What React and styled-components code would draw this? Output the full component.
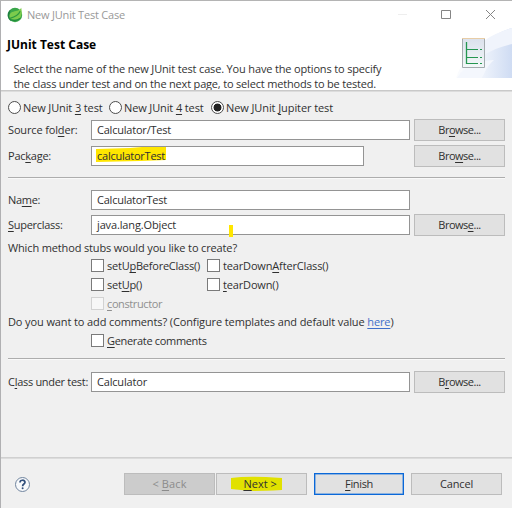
import React from 'react';
import styled, { createGlobalStyle } from 'styled-components';

const Global = createGlobalStyle`
  * { box-sizing: border-box; }
  body { margin: 0; background: #f0f0f0; overflow: hidden; }
`;

const Dialog = styled.main`
  width: 512px;
  height: 508px;
  display: flex;
  flex-direction: column;
  background: #f0f0f0;
  border-top: 1px solid #b4b4b4;
  border-left: 1px solid #b0b0b2;
  font: 11px/15px "Open Sans", "Noto Sans", sans-serif;
  color: #303030;
`;

const Text = styled.span`
  white-space: pre;
  letter-spacing: ${(p) => p.$ls || 0}px;
  u { text-decoration-thickness: 1px; text-underline-offset: 1.5px; text-decoration-skip-ink: none; }
`;

const TitleBar = styled.header`
  height: 27px;
  flex: none;
  display: flex;
  align-items: center;
  padding-left: 6px;
  background: #fff;
  color: #999;
`;

const TitleText = styled(Text)`
  margin-left: 4px;
  flex: 1;
`;

const WindowControls = styled.div`
  display: flex;
  width: 114px;
  height: 27px;
`;

const Banner = styled.section`
  height: 62px;
  flex: none;
  display: flex;
  justify-content: space-between;
  background: #fff;
`;

const BannerCopy = styled.div`
  display: flex;
  flex-direction: column;
  padding: 8px 0 0 6px;
  color: #333;
`;

const Heading = styled.h1`
  margin: 0 0 8px;
  font-size: 12px;
  line-height: 17px;
  font-weight: 700;
  color: #000;
`;

const BannerLine = styled(Text)`
  height: 15px;
  padding-left: 6.5px;
`;

const Rule = styled.div`
  height: 2px;
  flex: none;
  margin: ${(p) => p.$margin || '0'};
  border-top: 1px solid ${(p) => p.$color || '#adadad'};
  border-bottom: 1px solid ${(p) => p.$under || '#f9f9f9'};
`;

const Row = styled.div`
  display: flex;
  align-items: center;
  flex: none;
  height: ${(p) => p.$h}px;
  margin-top: ${(p) => p.$top || 0}px;
  padding-left: 7px;
`;

const FieldLabel = styled.label`
  width: 83px;
  flex: none;
  padding-bottom: 2px;
`;

const Field = styled.div`
  width: ${(p) => p.$w || 319}px;
  height: 20px;
  display: flex;
  align-items: center;
  flex: none;
  padding: 0 0 1px 5px;
  background: #fff;
  border: 1px solid #949494;
`;

const Mark = styled.span`
  position: relative;
  display: inline-flex;
  svg { position: absolute; left: ${(p) => p.$x}px; top: ${(p) => p.$y}px; }
  span { position: relative; }
`;

const Cursor = styled.i`
  position: relative;
  left: 53px;
  top: 6px;
  width: 4px;
  height: 12px;
  background: #ffe600;
`;

const Button = styled.button`
  width: ${(p) => p.$w || 91}px;
  height: 22px;
  flex: none;
  display: flex;
  align-items: center;
  justify-content: center;
  margin: 0 0 0 ${(p) => p.$left || 0}px;
  padding: 0 0 1px;
  font: inherit;
  color: ${(p) => (p.disabled ? '#8b8b8b' : '#303030')};
  background: ${(p) => (p.disabled ? '#cccccc' : '#e1e1e1')};
  border: ${(p) => (p.$primary ? '1px solid #0a68d8' : '1px solid #bcbcbc')};
  box-shadow: ${(p) => (p.$primary ? 'inset 0 0 0 .5px #3d86dd' : 'none')};
`;

const Choice = styled.label`
  display: flex;
  align-items: center;
  width: ${(p) => p.$w}px;
  color: ${(p) => (p.$off ? '#8f8f8f' : 'inherit')};
`;

const Radio = styled.span`
  width: 13px;
  height: 13px;
  margin-right: 2px;
  border: 1px solid #4c4c4c;
  border-radius: 50%;
  background: ${(p) => (p.$on ? 'radial-gradient(circle, #222 3.6px, #fff 4.3px)' : '#fff')};
`;

const Check = styled.span`
  width: 13px;
  height: 13px;
  margin-right: 3px;
  flex: none;
  border: 1px solid ${(p) => (p.$off ? '#d2d2d2' : '#7a7a7a')};
  background: ${(p) => (p.$off ? '#f7f7f7' : '#fff')};
`;

const Stubs = styled.div`
  display: grid;
  flex: none;
  grid-template-columns: 116px 140px;
  grid-template-rows: 19px 19px 18px;
  padding-left: 90px;
  margin-top: -1px;
`;

const Link = styled.a`
  color: #3f6fc9;
  text-decoration: underline;
  text-underline-offset: 1.5px;
  text-decoration-skip-ink: none;
`;

const Footer = styled.footer`
  display: flex;
  align-items: flex-start;
  flex: none;
  height: 49px;
  padding: 14px 0 0 13px;
`;

const HelpSlot = styled.div`
  width: 110px;
  height: 22px;
  display: flex;
  align-items: center;
`;

function SpringIcon() {
  return (
    <svg width="16" height="16" viewBox="0 0 16 16">
      <circle cx="8" cy="8" r="7.2" fill="#3aa64a" />
      <path d="M2.3 3.4A7.5 7.5 0 0 0 4.2 14.5C2.4 11.200 2 7.300 3.600 3Z" fill="#1f8040" />
      <path d="M14.200 0.800c.8 3.700 1.100 8.200-1.600 10.400-2.500 1.800-6.300 1.300-9.200.9C1.600 9.100 2.600 6.300 5.200 5.100 8.300 3.800 12 4.500 14.200.8Z" fill="#7ccb4c" />
      <path d="M13.200 4.300C11.500 8.200 8.200 9.900 3 11.300" fill="none" stroke="#2c9a41" strokeWidth="1.200" />
      <path d="M3 12.800C7 14 10.300 13.700 13 11.400" fill="none" stroke="#1f8a3c" strokeWidth="1.100" />
    </svg>
  );
}

function Controls() {
  return (
    <svg width="114" height="27" fill="none" stroke="#858585">
      <path d="M0 13.500h9" stroke="#eeeeee" />
      <path d="M43.500 9.500h9v8h-9z" />
      <path d="M88 9l9 9M97 9l-9 9" />
    </svg>
  );
}

function BannerArt() {
  return (
    <svg width="56" height="62" viewBox="0 0 56 62">
      <defs>
        <linearGradient id="sweep" x1="0" y1="0" x2="1" y2="0">
          <stop offset="0" stopColor="#fbfcfe" />
          <stop offset=".5" stopColor="#edf2fb" />
          <stop offset="1" stopColor="#cfdcf3" />
        </linearGradient>
        <linearGradient id="page" x1="0" y1="0" x2="0" y2="1">
          <stop offset="0" stopColor="#dbe1ec" />
          <stop offset="1" stopColor="#f3f8f9" />
        </linearGradient>
      </defs>
      <path d="M0 50C8 25 35 6 56 0v50Z" fill="url(#sweep)" />
      <path d="M28 13C36 7 46 3 56 0v16C46 18 36 22 28 27Z" fill="#f0f4fc" />
      <path d="M1 50C8 38 22 33 38 32 31 38 29 44 26 50Z" fill="#f4f7fd" />
      <path d="M6.500 10.500h22v29h-22z" fill="url(#page)" stroke="#a3abae" />
      <path d="M6 10.500h23" stroke="#e8cda6" />
      <path d="M10.500 14v22" stroke="#249650" strokeWidth="1.300" />
      <path d="M10 21.500h12M10 29.500h12M10 35.500h12M24 21.500h2M24 29.500h2M24 35.500h2" stroke="#249650" />
    </svg>
  );
}

function HelpIcon() {
  return (
    <svg width="17" height="17" viewBox="0 0 17 17" fill="none">
      <circle cx="8.500" cy="8.500" r="7" fill="#f7f9fb" stroke="#71859f" />
      <path d="M6 6.500C6 3.500 11 3.500 11 6.300 11 8.100 8.600 8 8.600 10.200" stroke="#314f7c" strokeWidth="1.700" />
      <circle cx="8.600" cy="12.300" r="1" fill="#314f7c" />
    </svg>
  );
}

const Browse = ({ children, ...rest }) => (
  <Button $left={4} {...rest}><Text $ls={-0.5}>{children}</Text></Button>
);

const CheckItem = ({ off, ls, children }) => (
  <Choice $off={off}><Check $off={off} /><Text $ls={ls}>{children}</Text></Choice>
);

export default function App() {
  return (
    <Dialog>
      <Global />
      <TitleBar>
        <SpringIcon />
        <TitleText $ls={-0.2}>New JUnit Test Case</TitleText>
        <WindowControls><Controls /></WindowControls>
      </TitleBar>
      <Banner>
        <BannerCopy>
          <Heading>JUnit Test Case</Heading>
          <BannerLine $ls={-0.159}>Select the name of the new JUnit test case. You have the options to specify</BannerLine>
          <BannerLine $ls={-0.184}>the class under test and on the next page, to select methods to be tested.</BannerLine>
        </BannerCopy>
        <BannerArt />
      </Banner>
      <Rule $color="#c9c9c9" $under="#dcdcdc" />
      <Row $h={17} $top={7}>
        <Choice $w={101}><Radio /><Text $ls={-0.125}>New JUnit <u>3</u> test</Text></Choice>
        <Choice $w={102}><Radio /><Text $ls={-0.125}>New JUnit <u>4</u> test</Text></Choice>
        <Choice><Radio $on /><Text $ls={-0.09}>New JUnit <u>J</u>upiter test</Text></Choice>
      </Row>
      <Row $h={22} $top={3}>
        <FieldLabel><Text $ls={-0.15}>Source fol<u>d</u>er:</Text></FieldLabel>
        <Field><Text $ls={-0.21}>Calculator/Test</Text></Field>
        <Browse>Br<u>o</u>wse...</Browse>
      </Row>
      <Row $h={22} $top={4}>
        <FieldLabel><Text $ls={-0.24}>Pac<u>k</u>age:</Text></FieldLabel>
        <Field $w={273}>
          <Mark $x={-1} $y={-1}>
            <svg width="71" height="16"><path d="M0 2L34 1 46 0H70V13L45 14 0 15Z" fill="#ffe600" /></svg>
            <Text $ls={-0.25}>calculatorTest</Text>
          </Mark>
        </Field>
        <Browse $left={50}>Bro<u>w</u>se...</Browse>
      </Row>
      <Rule $margin="10px 7px 0" />
      <Row $h={22} $top={10}>
        <FieldLabel><Text $ls={-0.32}>Na<u>m</u>e:</Text></FieldLabel>
        <Field><Text $ls={-0.23}>CalculatorTest</Text></Field>
      </Row>
      <Row $h={22} $top={3}>
        <FieldLabel><Text $ls={-0.29}><u>S</u>uperclass:</Text></FieldLabel>
        <Field><Text $ls={-0.14}>java.lang.Object</Text><Cursor /></Field>
        <Browse>Brows<u>e</u>...</Browse>
      </Row>
      <Row $h={19} $top={2}><Text $ls={-0.14}>Which method stubs would you like to create?</Text></Row>
      <Stubs>
        <CheckItem ls={-0.23}>setU<u>p</u>BeforeClass()</CheckItem>
        <CheckItem ls={-0.16}>tearDown<u>A</u>fterClass()</CheckItem>
        <CheckItem ls={-0.23}>set<u>U</u>p()</CheckItem>
        <CheckItem ls={-0.16}><u>t</u>earDown()</CheckItem>
        <CheckItem off ls={-0.39}><u>c</u>onstructor</CheckItem>
      </Stubs>
      <Row $h={19}>
        <Text $ls={-0.115}>Do you want to add comments? (Configure templates and default value <Link>here</Link>)</Text>
      </Row>
      <Row $h={19}>
        <FieldLabel />
        <CheckItem ls={-0.32}><u>G</u>enerate comments</CheckItem>
      </Row>
      <Rule $margin="8px 7px 0" />
      <Row $h={22} $top={11}>
        <FieldLabel><Text $ls={-0.3}>C<u>l</u>ass under test:</Text></FieldLabel>
        <Field><Text $ls={-0.18}>Calculator</Text></Field>
        <Browse>B<u>r</u>owse...</Browse>
      </Row>
      <Rule $margin="64px 0 0" $color="#d0d0d0" $under="#dcdcdc" />
      <Footer>
        <HelpSlot><HelpIcon /></HelpSlot>
        <Button disabled><Text $ls={0.1}>&lt; <u>B</u>ack</Text></Button>
        <Button $left={1}>
          <Mark $x={-12} $y={0}>
            <svg width="52" height="16"><path d="M0 2Q14 0 35 1L51 2V14Q30 15 20 15L0 13Z" fill="#e1e100" /></svg>
            <Text>{''}<u>N</u>ext &gt; </Text>
          </Mark>
        </Button>
        <Button $left={7} $w={90} $primary><Text $ls={-0.35}><u>F</u>inish</Text></Button>
        <Button $left={7}><Text $ls={-0.15}>Cancel</Text></Button>
      </Footer>
    </Dialog>
  );
}
